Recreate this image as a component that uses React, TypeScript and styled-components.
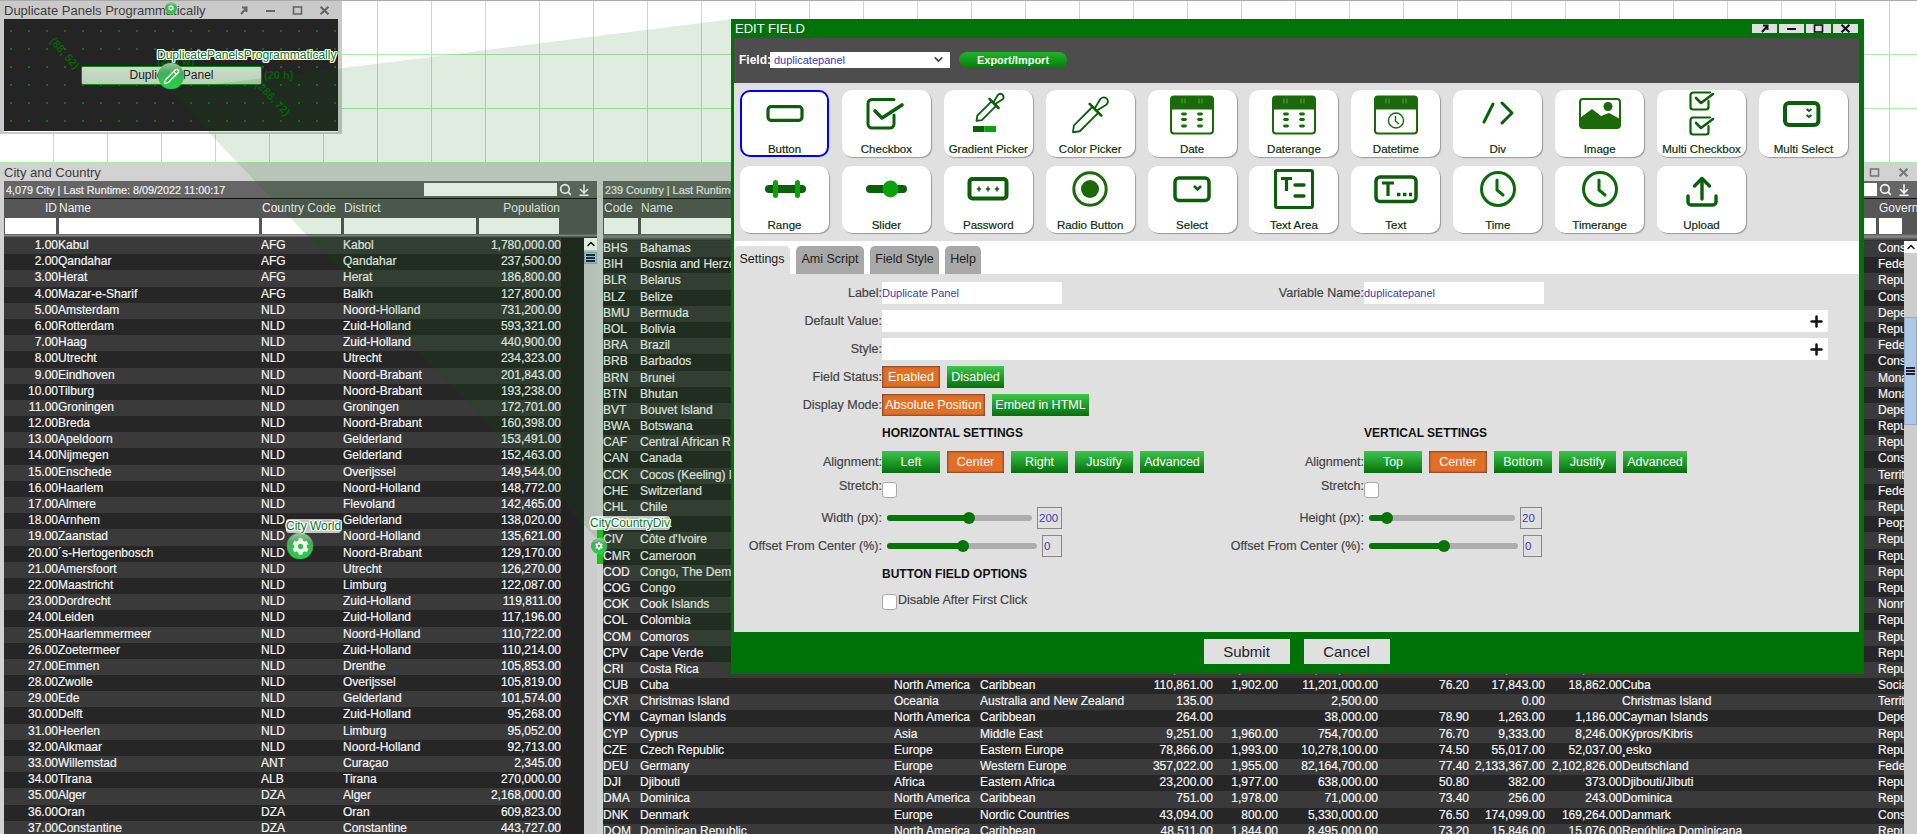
import React from "react";
import styled, { createGlobalStyle } from "styled-components";
import { ArrowDownToLine, ChevronDown, ChevronUp, Pencil, Plus, Search } from "lucide-react";
import { FaCog } from "react-icons/fa";

const DARK = "#0b5f0b";
const BRIGHT = "#0aa20a";

const GlobalStyle = createGlobalStyle`
  html, body {
    margin: 0;
    padding: 0;
    background: #fff;
    font-family: "Liberation Sans", Arial, sans-serif;
  }
`;

const Desktop = styled.div`
  position: relative;
  width: 1917px;
  height: 834px;
  overflow: hidden;
  border-top: 1px solid #aaa;
  box-sizing: border-box;
  background-color: #fff;
  background-image: linear-gradient(to right, transparent 53px, #aeeaae 53px),
    linear-gradient(to bottom, transparent 53px, #aeeaae 53px);
  background-size: 54px 54px;
`;

/* ---------- top preview window ---------- */

const PreviewWindow = styled.div`
  position: absolute;
  left: 0;
  top: -1px;
  width: 342px;
  height: 134px;
  background: #c9c9c9;
  border-top: 1px solid #aaa;
  box-sizing: border-box;
`;

const WindowTitle = styled.div`
  height: 18px;
  padding-left: 4px;
  display: flex;
  align-items: center;
  justify-content: space-between;
  font-size: 13px;
  color: #3c3c3c;
`;

const WindowControls = styled.div<{ $gap: number; $pad: number }>`
  display: flex;
  align-items: center;
  gap: ${(p) => p.$gap}px;
  padding-right: ${(p) => p.$pad}px;
`;

const Canvas = styled.div`
  position: relative;
  margin: 0 4px;
  height: 113px;
  background-color: #242424;
  background-image: radial-gradient(circle, #1b6a1b 1px, transparent 1.4px);
  background-size: 18px 18px;
  background-position: -2px 3px;
  border-bottom: 1px solid #fff;
  box-sizing: border-box;
`;

const PreviewButton = styled.div`
  position: absolute;
  left: 77px;
  top: 47px;
  width: 181px;
  height: 19px;
  box-sizing: border-box;
  border: 1px solid #0a8a0a;
  border-radius: 2px;
  background: linear-gradient(#c9dcc9, #b9d2b9);
  font-size: 12px;
  line-height: 17px;
  text-align: center;
  color: #222;
`;

const DimLabel = styled.span<{ $x: number; $y: number; $r: number }>`
  position: absolute;
  left: ${(p) => p.$x}px;
  top: ${(p) => p.$y}px;
  transform: rotate(${(p) => p.$r}deg);
  font-size: 11px;
  font-weight: bold;
  color: #0a5f0a;
  white-space: nowrap;
`;

const NodeLabel = styled.span<{ $x: number; $y: number; $size: number; $solid?: boolean }>`
  position: absolute;
  left: ${(p) => p.$x}px;
  top: ${(p) => p.$y}px;
  z-index: 6;
  font-size: ${(p) => p.$size}px;
  line-height: 14px;
  color: #0a7a1a;
  white-space: nowrap;
  background: ${(p) => (p.$solid ? "rgba(255, 255, 255, 0.72)" : "none")};
  border-radius: 3px;
  text-shadow: -1px 0 #fff, 1px 0 #fff, 0 -1px #fff, 0 1px #fff, -1px -1px #fff,
    1px 1px #fff, 1px -1px #fff, -1px 1px #fff;
`;

const Node = styled.div<{ $x: number; $y: number; $d: number }>`
  position: absolute;
  left: ${(p) => p.$x - p.$d / 2}px;
  top: ${(p) => p.$y - p.$d / 2}px;
  width: ${(p) => p.$d}px;
  height: ${(p) => p.$d}px;
  z-index: 6;
  border-radius: 50%;
  display: flex;
  align-items: center;
  justify-content: center;
  color: #eef8ee;
  background: linear-gradient(#9cc7a2 0%, #45ad5c 35%, #20d443 100%);
  box-shadow: 0 0 1px #cfe8cf;
`;

const Connector = styled.div`
  position: absolute;
  left: 597px;
  top: 527px;
  width: 6px;
  height: 36px;
  z-index: 5;
  background: #19c219;
`;

const Beam = styled.svg`
  position: absolute;
  left: 0;
  top: 0;
  z-index: 4;
  pointer-events: none;
`;

/* ---------- city and country panel ---------- */

const DataWindow = styled.div`
  position: absolute;
  left: 0;
  top: 162px;
  width: 1917px;
  height: 672px;
  background: #d2d2d2;
`;

const DataBody = styled.div`
  display: flex;
  padding-left: 4px;
  gap: 6px;
`;

const TableWrap = styled.div<{ $w: number }>`
  width: ${(p) => p.$w}px;
  flex: none;
  overflow: hidden;
`;

const Toolbar = styled.div`
  height: 17px;
  border-bottom: 1px solid #111;
  background: #666;
  display: flex;
  align-items: center;
  padding-left: 2px;
  font-size: 10.8px;
  color: #eee;
  -webkit-text-stroke: 0.2px #eee;
  white-space: nowrap;
`;

const ToolbarText = styled.span`
  flex: 1;
  overflow: hidden;
`;

const ToolbarSearch = styled.div<{ $w: number }>`
  width: ${(p) => p.$w}px;
  height: 13px;
  background: #fff;
  flex: none;
`;

const ToolIcons = styled.div`
  display: flex;
  align-items: center;
  gap: 5px;
  width: 38px;
  flex: none;
  padding-left: 2px;
  color: #fff;
`;

const ColumnRow = styled.div<{ $cols: string }>`
  display: grid;
  grid-template-columns: ${(p) => p.$cols};
`;

const HeaderRow = styled(ColumnRow)`
  height: 19px;
  background: #565656;
  font-size: 12px;
  line-height: 19px;
  color: #f2f2f2;
`;

const HeaderCell = styled.div<{ $right?: boolean }>`
  padding: 0 ${(p) => (p.$right ? "1px" : "0")} 0 ${(p) => (p.$right ? "0" : "1px")};
  text-align: ${(p) => (p.$right ? "right" : "left")};
  white-space: nowrap;
`;

const FilterRow = styled(ColumnRow)`
  height: 16px;
  background: #565656;
`;

const FilterCell = styled.div`
  background: #fff;
  margin: 0 2px 0 1px;
`;

const Band = styled.div<{ $h: number }>`
  height: ${(p) => p.$h}px;
  background: linear-gradient(#5e5e5e, #8a8a8a 40%, #262626);
`;

const RowsArea = styled.div`
  display: flex;
  background: #222;
`;

const Rows = styled.div<{ $w: number }>`
  width: ${(p) => p.$w}px;
  flex: none;
  overflow: hidden;
`;

const DataRow = styled(ColumnRow)<{ $odd: boolean }>`
  height: 16.19px;
  background: ${(p) => (p.$odd ? "#3a3a3a" : "#262626")};
  color: #f4f4f4;
  -webkit-text-stroke: 0.2px #f4f4f4;
  font-size: 12px;
  line-height: 14px;
  white-space: nowrap;
`;

const DataCell = styled.div<{ $right?: boolean }>`
  overflow: hidden;
  text-align: ${(p) => (p.$right ? "right" : "left")};
`;

const Scrollbar = styled.div<{ $gap: number; $w: number }>`
  margin-left: ${(p) => p.$gap}px;
  width: ${(p) => p.$w}px;
  flex: none;
  height: 600px;
  background: #cdcdcd;
  display: flex;
  flex-direction: column;
`;

const ScrollUp = styled.div`
  height: 12px;
  background: #fff;
  color: #111;
  display: flex;
  align-items: center;
  justify-content: center;
`;

const ScrollThumb = styled.div<{ $top: number; $h: number }>`
  margin-top: ${(p) => p.$top}px;
  height: ${(p) => p.$h}px;
  background: #aec8e8;
  border: 1px solid #8ea8c8;
  box-sizing: border-box;
  display: flex;
  align-items: center;
  justify-content: center;
`;

const Grip = styled.div`
  width: 9px;
  height: 8px;
  border-top: 2px solid #223;
  border-bottom: 2px solid #223;
  box-sizing: border-box;
  &::after {
    content: "";
    display: block;
    margin-top: 1px;
    height: 2px;
    background: #223;
  }
`;

/* ---------- edit field dialog ---------- */

const Dialog = styled.div`
  position: absolute;
  left: 731px;
  top: 18px;
  width: 1133px;
  height: 655px;
  z-index: 10;
  background: #007308;
  display: flex;
  flex-direction: column;
  padding: 0 5px 0 3px;
  box-sizing: border-box;
`;

const DialogHead = styled.div`
  height: 19px;
  flex: none;
  display: flex;
  align-items: center;
  justify-content: space-between;
  color: #fff;
  font-size: 13px;
  padding-left: 1px;
`;

const DialogControls = styled.div`
  display: flex;
  gap: 2px;
  margin-right: 1px;
`;

const DialogControl = styled.div`
  width: 25px;
  height: 9px;
  background: #e0e0e0;
  display: flex;
  align-items: center;
  justify-content: center;
`;

const FieldBar = styled.div`
  height: 45px;
  flex: none;
  background: #4d4d4d;
  display: flex;
  align-items: center;
  padding: 0 0 2px 5px;
  box-sizing: border-box;
`;

const FieldLabel = styled.span`
  width: 31px;
  color: #fff;
  font-size: 12px;
  font-weight: bold;
`;

const FieldSelect = styled.div`
  width: 180px;
  height: 16px;
  background: #fff;
  color: #3b3bb5;
  font-size: 11px;
  line-height: 16px;
  padding: 0 5px 0 4px;
  box-sizing: border-box;
  display: flex;
  align-items: center;
  justify-content: space-between;
`;

const PillButton = styled.div`
  margin-left: 9px;
  width: 108px;
  height: 16px;
  border-radius: 8px;
  background: linear-gradient(#1fb52a, #067a0c);
  color: #fff;
  font-size: 11px;
  font-weight: bold;
  line-height: 16px;
  text-align: center;
`;

const Palette = styled.div`
  height: 158px;
  flex: none;
  background: #e0e0e0;
  box-sizing: border-box;
  padding: 7px 0 0 6px;
  display: grid;
  grid-template-columns: repeat(11, 89px);
  grid-auto-rows: 67px;
  column-gap: 12.9px;
  row-gap: 9px;
`;

const Card = styled.div<{ $active?: boolean }>`
  box-sizing: border-box;
  background: #fff;
  border-radius: 10px;
  border: ${(p) => (p.$active ? "2px solid #0000f0" : "none")};
  box-shadow: ${(p) => (p.$active ? "none" : "1px 1px 1px #999")};
  padding-top: ${(p) => (p.$active ? "0" : "2px")};
  display: flex;
  flex-direction: column;
  align-items: center;
`;

const CardIcon = styled.svg`
  width: 56px;
  height: 48px;
  flex: none;
  overflow: visible;
  margin-top: -2px;
`;

const CardLabel = styled.div`
  margin-top: 4px;
  font-size: 11.5px;
  line-height: 14px;
  color: #0d2f0d;
  -webkit-text-stroke: 0.2px #0d2f0d;
  white-space: nowrap;
`;

const TabStrip = styled.div`
  height: 33px;
  flex: none;
  background: #fff;
  display: flex;
  align-items: flex-end;
  gap: 6px;
`;

const Tab = styled.div<{ $active?: boolean; $w: number }>`
  width: ${(p) => p.$w}px;
  height: 28px;
  border-radius: 5px 5px 0 0;
  background: ${(p) => (p.$active ? "#e0e0e0" : "#a8a8a8")};
  color: #222;
  font-size: 12.5px;
  line-height: 27px;
  text-align: center;
`;

const FormBody = styled.div`
  height: 358px;
  flex: none;
  background: #e0e0e0;
  box-sizing: border-box;
  padding-top: 8px;
  display: flex;
  flex-direction: column;
  gap: 6px;
`;

const FormRow = styled.div<{ $h?: number }>`
  display: grid;
  grid-template-columns: 148px 328px 154px 1fr;
  height: ${(p) => p.$h || 22}px;
  align-items: center;
`;

const FormLabel = styled.div<{ $top?: boolean }>`
  text-align: right;
  align-self: ${(p) => (p.$top ? "start" : "center")};
  font-size: 12.5px;
  line-height: 14px;
  color: #444;
  -webkit-text-stroke: 0.2px #444;
  white-space: nowrap;
`;

const Controls = styled.div<{ $gap?: number; $span?: boolean }>`
  display: flex;
  align-items: center;
  gap: ${(p) => p.$gap ?? 7}px;
  grid-column: ${(p) => (p.$span ? "2 / -1" : "auto")};
`;

const TextInput = styled.div<{ $w: number }>`
  width: ${(p) => p.$w}px;
  height: 22px;
  flex: none;
  background: #fff;
  color: #3b3bb5;
  font-size: 11px;
  line-height: 22px;
  display: flex;
  align-items: center;
  justify-content: space-between;
`;

const PlusSlot = styled.span`
  margin-left: auto;
  padding-right: 3px;
  display: flex;
  color: #111;
`;

const ActionButton = styled.div<{ $w: number; $on?: boolean }>`
  width: ${(p) => p.$w}px;
  height: 100%;
  min-height: 22px;
  flex: none;
  box-sizing: border-box;
  color: #fff;
  font-size: 12.5px;
  line-height: 22px;
  text-align: center;
  white-space: nowrap;
  background: ${(p) =>
    p.$on ? "#e36f26" : "linear-gradient(#3cc64c, #066f0a)"};
  box-shadow: ${(p) => (p.$on ? "inset 0 0 2px 1px #7a4a2a" : "none")};
`;

const SectionTitle = styled.div`
  font-size: 12px;
  font-weight: bold;
  color: #111;
  white-space: nowrap;
`;

const CheckBox = styled.div`
  width: 13px;
  height: 14px;
  flex: none;
  background: #fff;
  border: 1px solid #a8a8a8;
  border-radius: 3px;
`;

const CheckText = styled.span`
  font-size: 12.5px;
  color: #444;
  -webkit-text-stroke: 0.2px #444;
  white-space: nowrap;
  margin-bottom: 4px;
`;

const Track = styled.div<{ $w: number }>`
  position: relative;
  width: ${(p) => p.$w}px;
  height: 6px;
  flex: none;
  margin-left: 5px;
  border-radius: 3px;
  background: #adadad;
`;

const TrackFill = styled.div`
  height: 100%;
  border-radius: 3px;
  background: #067406;
`;

const Thumb = styled.div`
  position: absolute;
  top: -3px;
  width: 12px;
  height: 12px;
  margin-left: -6px;
  border-radius: 50%;
  background: #067406;
`;

const NumberBox = styled.div<{ $w: number }>`
  width: ${(p) => p.$w}px;
  height: 22px;
  flex: none;
  box-sizing: border-box;
  border: 1px solid #888;
  color: #3b3bb5;
  font-size: 11.5px;
  line-height: 20px;
  padding-left: 1px;
`;

const Footer = styled.div`
  flex: 1;
  display: flex;
  justify-content: center;
  align-items: flex-start;
  gap: 14px;
  padding-top: 7px;
`;

const FooterButton = styled.div`
  width: 86px;
  height: 25px;
  background: #e0e0e0;
  color: #222;
  font-size: 15px;
  line-height: 25px;
  text-align: center;
`;

/* ---------- icons ---------- */

const Dropper = ({ x, y, s }: { x: number; y: number; s: number }) => (
  <g transform={`translate(${x} ${y}) scale(${s})`} fill="#fff" stroke={DARK} strokeWidth={1.8 / s} strokeLinejoin="round" strokeLinecap="round">
    <path d="M2 38 L3 31 L22 12 L28 18 L9 37 Z" />
    <path d="M24 14 L30 4 Q33 1 36.5 3.5 Q39 7 36 10 L26 16 Z" />
    <path d="M19 9 L31 21" strokeWidth={2.6 / s} />
  </g>
);

const Calendar = ({ children }: { children: React.ReactNode }) => (
  <g transform="translate(0 2.5)">
    <rect x="7" y="4" width="42" height="37" rx="3" fill="#fff" stroke="#1a6a0a" strokeWidth="2" />
    <path d="M7 7a3 3 0 0 1 3-3h36a3 3 0 0 1 3 3v10H7z" fill="#1a6a0a" />
    <path d="M18 6v5M21 6v5M35 6v5M38 6v5" stroke="#5f9a5f" strokeWidth="1" />
    {children}
  </g>
);

const Dashes = () => (
  <path
    d="M18.5 21.5h3M34.5 21.5h3M18.5 27h3M34.5 27h3M18.5 33.5h3M34.5 33.5h3"
    stroke="#1a6a0a"
    strokeWidth="2.8"
    strokeLinecap="round"
  />
);

const CheckMark = ({ y }: { y: number }) => (
  <g transform={`translate(16 ${y})`} fill="none" stroke={DARK} strokeLinecap="round" strokeLinejoin="round">
    <path d="M20 2.5 H3 a2.5 2.5 0 0 0 -2.5 2.5 V17 a2.5 2.5 0 0 0 2.5 2.5 H16 a2.5 2.5 0 0 0 2.5 -2.5 V11" strokeWidth="2.2" />
    <path d="M6 8 l5 5 L23 4" strokeWidth="2.6" />
  </g>
);

const Clock = () => (
  <g fill="none" stroke="#0b6a0b" strokeLinecap="round">
    <circle cx="28" cy="23" r="16.5" strokeWidth="3" />
    <path d="M27 14 V24 L33 29" strokeWidth="3" />
  </g>
);

const icons: Record<string, React.ReactNode> = {
  Button: <rect x="11" y="16.7" width="34" height="13.6" rx="3" fill="none" stroke={DARK} strokeWidth="3.2" />,
  Checkbox: (
    <g fill="none" stroke={DARK} strokeLinecap="round" strokeLinejoin="round">
      <path d="M36 9.5 H14 a4 4 0 0 0 -4 4 V34 a4 4 0 0 0 4 4 H32 a4 4 0 0 0 4 -4 V25" strokeWidth="3" />
      <path d="M17 21 l7 7 L44 15" strokeWidth="3.6" />
    </g>
  ),
  "Gradient Picker": (
    <g>
      <Dropper x={15} y={2} s={0.76} />
      <rect x="13" y="36" width="11.5" height="6" fill={DARK} />
      <rect x="24.5" y="36" width="11.5" height="6" fill={BRIGHT} />
    </g>
  ),
  "Color Picker": <Dropper x={9} y={5} s={0.98} />,
  Date: <Calendar><Dashes /></Calendar>,
  Daterange: <Calendar><Dashes /></Calendar>,
  Datetime: (
    <Calendar>
      <g fill="none" stroke="#1a6a0a" strokeWidth="1.4">
        <circle cx="28" cy="28" r="7.5" />
        <path d="M27.5 23.5 V28.5 L31 31.5" />
      </g>
    </Calendar>
  ),
  Div: (
    <g fill="none" stroke={DARK} strokeWidth="3" strokeLinecap="round" strokeLinejoin="round">
      <path d="M23 14 L14 32" />
      <path d="M32 13 L42 23 L32 33" />
    </g>
  ),
  Image: (
    <g>
      <rect x="8" y="9" width="40" height="29" rx="3" fill="#fff" stroke="#1a6a0a" strokeWidth="2" />
      <path d="M8 28 L20 19 L29 26 L37 23 L48 29 V35 a3 3 0 0 1 -3 3 H11 a3 3 0 0 1 -3 -3z" fill="#1a6a0a" />
      <circle cx="36" cy="16.5" r="4.5" fill="#1a6a0a" />
    </g>
  ),
  "Multi Checkbox": (
    <g>
      <CheckMark y={0} />
      <CheckMark y={25} />
    </g>
  ),
  "Multi Select": (
    <g fill="none" stroke={DARK}>
      <rect x="10" y="13" width="33.4" height="22" rx="4" strokeWidth="4" />
      <path d="M31.5 19 l2.5 2 l2.5 -2 M31.5 25 l2.5 2 l2.5 -2" strokeWidth="2" />
    </g>
  ),
  Range: (
    <g>
      <rect x="8" y="19" width="41" height="8" rx="4" fill={DARK} />
      <rect x="16" y="14" width="5" height="18" rx="2.5" fill={BRIGHT} />
      <rect x="38" y="14" width="5" height="18" rx="2.5" fill={BRIGHT} />
    </g>
  ),
  Slider: (
    <g>
      <rect x="8" y="19" width="41" height="8" rx="4" fill={DARK} />
      <ellipse cx="32.5" cy="23" rx="8" ry="8.5" fill={BRIGHT} />
    </g>
  ),
  Password: (
    <g>
      <rect x="9.5" y="13" width="37" height="19.5" rx="3" fill="none" stroke={DARK} strokeWidth="4" />
      <path d="M19 20.5v5M16.8 23h4.4M28 20.5v5M25.8 23h4.4M37 20.5v5M34.8 23h4.4" stroke={DARK} strokeWidth="1.5" />
    </g>
  ),
  "Radio Button": (
    <g>
      <circle cx="28" cy="23" r="16.2" fill="none" stroke="#1a6a0a" strokeWidth="3" />
      <circle cx="28" cy="23" r="9" fill="#1a6a0a" />
    </g>
  ),
  Select: (
    <g fill="none" stroke={DARK}>
      <rect x="11" y="12" width="34" height="22.5" rx="4" strokeWidth="3.5" />
      <path d="M30 20 l3.5 3.5 L37 20" strokeWidth="2.6" />
    </g>
  ),
  "Text Area": (
    <g fill="none" stroke={DARK}>
      <rect x="9.5" y="4.5" width="37" height="37" rx="1.5" strokeWidth="3" />
      <path d="M15 12.5 H26 M20.5 12.5 V25" strokeWidth="3.2" />
      <path d="M29 19 H38 M29 30 H38" strokeWidth="3.4" strokeLinecap="round" />
    </g>
  ),
  Text: (
    <g fill="none" stroke={DARK}>
      <rect x="8" y="11" width="40" height="24.5" rx="4" strokeWidth="3.5" />
      <path d="M14 17 H26 M20 17 V30" strokeWidth="3.2" />
      <path d="M29 28.5 h3.4 M35 28.5 h3.4 M41 28.5 h3" strokeWidth="3.4" />
    </g>
  ),
  Time: <Clock />,
  Timerange: <Clock />,
  Upload: (
    <g fill="none" stroke={DARK} strokeWidth="3.4" strokeLinecap="round" strokeLinejoin="round">
      <path d="M28 33 V13" />
      <path d="M20.5 20 L28 12.5 L35.5 20" />
      <path d="M14 30 V36 a3 3 0 0 0 3 3 H39 a3 3 0 0 0 3 -3 V30" />
    </g>
  ),
};

const paletteItems = [
  "Button", "Checkbox", "Gradient Picker", "Color Picker", "Date", "Daterange", "Datetime", "Div", "Image", "Multi Checkbox", "Multi Select",
  "Range", "Slider", "Password", "Radio Button", "Select", "Text Area", "Text", "Time", "Timerange", "Upload",
];

const WinGlyph = ({ kind, color = "#111" }: { kind: string; color?: string }) => (
  <svg width="11" height="9" viewBox="0 0 11 9" fill="none" stroke={color} strokeWidth="2">
    {kind === "pin" && <path d="M3 8 L8 2.5 M4 1.5 H8.5 V6" />}
    {kind === "min" && <path d="M1 5 H10" />}
    {kind === "max" && <rect x="1.5" y="1" width="8" height="7" strokeWidth="1.6" />}
    {kind === "close" && <path d="M1.5 0.8 L9.5 8.2 M9.5 0.8 L1.5 8.2" strokeWidth="2.2" />}
  </svg>
);

/* ---------- data ---------- */

const cities: [string, string, string, string, string][] = [
  ["1.00", "Kabul", "AFG", "Kabol", "1,780,000.00"],
  ["2.00", "Qandahar", "AFG", "Qandahar", "237,500.00"],
  ["3.00", "Herat", "AFG", "Herat", "186,800.00"],
  ["4.00", "Mazar-e-Sharif", "AFG", "Balkh", "127,800.00"],
  ["5.00", "Amsterdam", "NLD", "Noord-Holland", "731,200.00"],
  ["6.00", "Rotterdam", "NLD", "Zuid-Holland", "593,321.00"],
  ["7.00", "Haag", "NLD", "Zuid-Holland", "440,900.00"],
  ["8.00", "Utrecht", "NLD", "Utrecht", "234,323.00"],
  ["9.00", "Eindhoven", "NLD", "Noord-Brabant", "201,843.00"],
  ["10.00", "Tilburg", "NLD", "Noord-Brabant", "193,238.00"],
  ["11.00", "Groningen", "NLD", "Groningen", "172,701.00"],
  ["12.00", "Breda", "NLD", "Noord-Brabant", "160,398.00"],
  ["13.00", "Apeldoorn", "NLD", "Gelderland", "153,491.00"],
  ["14.00", "Nijmegen", "NLD", "Gelderland", "152,463.00"],
  ["15.00", "Enschede", "NLD", "Overijssel", "149,544.00"],
  ["16.00", "Haarlem", "NLD", "Noord-Holland", "148,772.00"],
  ["17.00", "Almere", "NLD", "Flevoland", "142,465.00"],
  ["18.00", "Arnhem", "NLD", "Gelderland", "138,020.00"],
  ["19.00", "Zaanstad", "NLD", "Noord-Holland", "135,621.00"],
  ["20.00", "´s-Hertogenbosch", "NLD", "Noord-Brabant", "129,170.00"],
  ["21.00", "Amersfoort", "NLD", "Utrecht", "126,270.00"],
  ["22.00", "Maastricht", "NLD", "Limburg", "122,087.00"],
  ["23.00", "Dordrecht", "NLD", "Zuid-Holland", "119,811.00"],
  ["24.00", "Leiden", "NLD", "Zuid-Holland", "117,196.00"],
  ["25.00", "Haarlemmermeer", "NLD", "Noord-Holland", "110,722.00"],
  ["26.00", "Zoetermeer", "NLD", "Zuid-Holland", "110,214.00"],
  ["27.00", "Emmen", "NLD", "Drenthe", "105,853.00"],
  ["28.00", "Zwolle", "NLD", "Overijssel", "105,819.00"],
  ["29.00", "Ede", "NLD", "Gelderland", "101,574.00"],
  ["30.00", "Delft", "NLD", "Zuid-Holland", "95,268.00"],
  ["31.00", "Heerlen", "NLD", "Limburg", "95,052.00"],
  ["32.00", "Alkmaar", "NLD", "Noord-Holland", "92,713.00"],
  ["33.00", "Willemstad", "ANT", "Curaçao", "2,345.00"],
  ["34.00", "Tirana", "ALB", "Tirana", "270,000.00"],
  ["35.00", "Alger", "DZA", "Alger", "2,168,000.00"],
  ["36.00", "Oran", "DZA", "Oran", "609,823.00"],
  ["37.00", "Constantine", "DZA", "Constantine", "443,727.00"],
];

// code, name, government, then the columns that show below the dialog
const countries: string[][] = [
  ["BHS", "Bahamas", "Constitutional Monarchy"],
  ["BIH", "Bosnia and Herzegovina", "Federal Republic"],
  ["BLR", "Belarus", "Republic"],
  ["BLZ", "Belize", "Constitutional Monarchy"],
  ["BMU", "Bermuda", "Dependent Territory"],
  ["BOL", "Bolivia", "Republic"],
  ["BRA", "Brazil", "Federal Republic"],
  ["BRB", "Barbados", "Constitutional Monarchy"],
  ["BRN", "Brunei", "Monarchy"],
  ["BTN", "Bhutan", "Monarchy"],
  ["BVT", "Bouvet Island", "Dependent Territory"],
  ["BWA", "Botswana", "Republic"],
  ["CAF", "Central African Republic", "Republic"],
  ["CAN", "Canada", "Constitutional Monarchy"],
  ["CCK", "Cocos (Keeling) Islands", "Territory"],
  ["CHE", "Switzerland", "Federation"],
  ["CHL", "Chile", "Republic"],
  ["CHN", "China", "People's Republic"],
  ["CIV", "Côte d'Ivoire", "Republic"],
  ["CMR", "Cameroon", "Republic"],
  ["COD", "Congo, The Democratic Republic", "Republic"],
  ["COG", "Congo", "Republic"],
  ["COK", "Cook Islands", "Nonmetropolitan Territory"],
  ["COL", "Colombia", "Republic"],
  ["COM", "Comoros", "Republic"],
  ["CPV", "Cape Verde", "Republic"],
  ["CRI", "Costa Rica", "Republic", "North America", "Central America", "51,100.00", "1,821.00", "4,023,000.00", "75.80", "10,226.00", "9,757.00", "Costa Rica"],
  ["CUB", "Cuba", "Socialistic Republic", "North America", "Caribbean", "110,861.00", "1,902.00", "11,201,000.00", "76.20", "17,843.00", "18,862.00", "Cuba"],
  ["CXR", "Christmas Island", "Territory", "Oceania", "Australia and New Zealand", "135.00", "", "2,500.00", "", "0.00", "", "Christmas Island"],
  ["CYM", "Cayman Islands", "Dependent Territory", "North America", "Caribbean", "264.00", "", "38,000.00", "78.90", "1,263.00", "1,186.00", "Cayman Islands"],
  ["CYP", "Cyprus", "Republic", "Asia", "Middle East", "9,251.00", "1,960.00", "754,700.00", "76.70", "9,333.00", "8,246.00", "Kýpros/Kibris"],
  ["CZE", "Czech Republic", "Republic", "Europe", "Eastern Europe", "78,866.00", "1,993.00", "10,278,100.00", "74.50", "55,017.00", "52,037.00", "¸esko"],
  ["DEU", "Germany", "Federal Republic", "Europe", "Western Europe", "357,022.00", "1,955.00", "82,164,700.00", "77.40", "2,133,367.00", "2,102,826.00", "Deutschland"],
  ["DJI", "Djibouti", "Republic", "Africa", "Eastern Africa", "23,200.00", "1,977.00", "638,000.00", "50.80", "382.00", "373.00", "Djibouti/Jibuti"],
  ["DMA", "Dominica", "Republic", "North America", "Caribbean", "751.00", "1,978.00", "71,000.00", "73.40", "256.00", "243.00", "Dominica"],
  ["DNK", "Denmark", "Constitutional Monarchy", "Europe", "Nordic Countries", "43,094.00", "800.00", "5,330,000.00", "76.50", "174,099.00", "169,264.00", "Danmark"],
  ["DOM", "Dominican Republic", "Republic", "North America", "Caribbean", "48,511.00", "1,844.00", "8,495,000.00", "73.20", "15,846.00", "15,076.00", "República Dominicana"],
];

const CITY_COLS = "54px 203px 82px 135px 83px";
const COUNTRY_COLS = "37px 254px 86px 149px 84px 65px 100px 91px 76px 77px 256px 26px";

const Slider = ({ track, value, box, num }: { track: number; value: number; box: number; num: string }) => (
  <Controls $gap={5}>
    <Track $w={track}>
      <TrackFill style={{ width: value }} />
      <Thumb style={{ left: value }} />
    </Track>
    <NumberBox $w={box}>{num}</NumberBox>
  </Controls>
);

const ButtonSet = ({ items }: { items: [string, number, boolean?][] }) => (
  <Controls>
    {items.map(([label, w, on]) => (
      <ActionButton key={label} $w={w} $on={on}>
        {label}
      </ActionButton>
    ))}
  </Controls>
);

const App = () => (
  <Desktop>
    <GlobalStyle />

    <PreviewWindow>
      <WindowTitle>
        Duplicate Panels Programmatically
        <WindowControls $gap={16} $pad={12}>
          <WinGlyph kind="pin" color="#666" />
          <WinGlyph kind="min" color="#666" />
          <WinGlyph kind="max" color="#666" />
          <WinGlyph kind="close" color="#666" />
        </WindowControls>
      </WindowTitle>
      <Canvas>
        <DimLabel $x={42} $y={28} $r={48}>(88, 52)</DimLabel>
        <DimLabel $x={153} $y={36} $r={0}>(200 w)</DimLabel>
        <DimLabel $x={260} $y={50} $r={0}>(20 h)</DimLabel>
        <DimLabel $x={247} $y={73} $r={46}>(286, 72)</DimLabel>
        <PreviewButton>Duplicate Panel</PreviewButton>
      </Canvas>
    </PreviewWindow>

    <DataWindow>
      <WindowTitle>
        City and Country
        <WindowControls $gap={18} $pad={8}>
          <WinGlyph kind="max" color="#777" />
          <WinGlyph kind="close" color="#777" />
        </WindowControls>
      </WindowTitle>
      <DataBody>
        <TableWrap $w={593}>
          <Toolbar>
            <ToolbarText>4,079 City | Last Runtime: 8/09/2022 11:00:17</ToolbarText>
            <ToolbarSearch $w={133} />
            <ToolIcons>
              <Search size={13} strokeWidth={3} />
              <ArrowDownToLine size={14} strokeWidth={2.5} />
            </ToolIcons>
          </Toolbar>
          <HeaderRow $cols={CITY_COLS}>
            <HeaderCell $right>ID</HeaderCell>
            <HeaderCell>Name</HeaderCell>
            <HeaderCell>Country Code</HeaderCell>
            <HeaderCell>District</HeaderCell>
            <HeaderCell $right>Population</HeaderCell>
          </HeaderRow>
          <FilterRow $cols={CITY_COLS}>
            <FilterCell />
            <FilterCell />
            <FilterCell />
            <FilterCell />
            <FilterCell />
          </FilterRow>
          <Band $h={4} />
          <RowsArea>
            <Rows $w={557}>
              {cities.map((c, i) => (
                <DataRow key={c[0]} $cols={CITY_COLS} $odd={i % 2 === 0}>
                  <DataCell $right>{c[0]}</DataCell>
                  <DataCell>{c[1]}</DataCell>
                  <DataCell>{c[2]}</DataCell>
                  <DataCell>{c[3]}</DataCell>
                  <DataCell $right>{c[4]}</DataCell>
                </DataRow>
              ))}
            </Rows>
            <Scrollbar $gap={23} $w={13}>
              <ScrollUp><ChevronUp size={12} strokeWidth={3} /></ScrollUp>
              <ScrollThumb $top={2} $h={12}><Grip /></ScrollThumb>
            </Scrollbar>
          </RowsArea>
        </TableWrap>
        <TableWrap $w={1314}>
          <Toolbar>
            <ToolbarText>239 Country | Last Runtime: 8/09/2022 11:00:17</ToolbarText>
            <ToolbarSearch $w={100} />
            <ToolIcons>
              <Search size={13} strokeWidth={3} />
              <ArrowDownToLine size={14} strokeWidth={2.5} />
            </ToolIcons>
          </Toolbar>
          <HeaderRow $cols={COUNTRY_COLS}>
            <HeaderCell>Code</HeaderCell>
            <HeaderCell>Name</HeaderCell>
            {Array.from({ length: 8 }).map((_, i) => (
              <HeaderCell key={i} />
            ))}
            <HeaderCell />
            <HeaderCell>Government</HeaderCell>
          </HeaderRow>
          <FilterRow $cols={COUNTRY_COLS}>
            {Array.from({ length: 12 }).map((_, i) => (
              <FilterCell key={i} />
            ))}
          </FilterRow>
          <Band $h={7} />
          <RowsArea>
            <Rows $w={1301}>
              {countries.map((c, i) => (
                <DataRow key={c[0]} $cols={COUNTRY_COLS} $odd={i % 2 === 0}>
                  <DataCell>{c[0]}</DataCell>
                  <DataCell>{c[1]}</DataCell>
                  <DataCell>{c[3]}</DataCell>
                  <DataCell>{c[4]}</DataCell>
                  <DataCell $right>{c[5]}</DataCell>
                  <DataCell $right>{c[6]}</DataCell>
                  <DataCell $right>{c[7]}</DataCell>
                  <DataCell $right>{c[8]}</DataCell>
                  <DataCell $right>{c[9]}</DataCell>
                  <DataCell $right>{c[10]}</DataCell>
                  <DataCell>{c[11]}</DataCell>
                  <DataCell>{c[2]}</DataCell>
                </DataRow>
              ))}
            </Rows>
            <Scrollbar $gap={0} $w={13}>
              <ScrollUp><ChevronUp size={12} strokeWidth={3} /></ScrollUp>
              <ScrollThumb $top={64} $h={108}><Grip /></ScrollThumb>
            </Scrollbar>
          </RowsArea>
        </TableWrap>
      </DataBody>
    </DataWindow>

    <Beam width="1917" height="834" viewBox="0 0 1917 834">
      <polygon points="168,89 733,18 733,680" fill="#006400" fillOpacity="0.12" />
    </Beam>

    <NodeLabel $x={157} $y={47} $size={12}>DuplicatePanelsProgrammatically</NodeLabel>
    <Node $x={171} $y={75} $d={26}><Pencil size={17} strokeWidth={2} /></Node>
    <Node $x={171} $y={7} $d={12}><FaCog size={6} /></Node>
    <NodeLabel $x={286} $y={518} $size={12} $solid>City World</NodeLabel>
    <Node $x={300} $y={545} $d={26}><FaCog size={17} /></Node>
    <Connector />
    <NodeLabel $x={590} $y={515} $size={12} $solid>CityCountryDiv</NodeLabel>
    <Node $x={599} $y={545} $d={16}><FaCog size={8} /></Node>

    <Dialog>
      <DialogHead>
        EDIT FIELD
        <DialogControls>
          <DialogControl><WinGlyph kind="pin" /></DialogControl>
          <DialogControl><WinGlyph kind="min" /></DialogControl>
          <DialogControl><WinGlyph kind="max" /></DialogControl>
          <DialogControl><WinGlyph kind="close" /></DialogControl>
        </DialogControls>
      </DialogHead>
      <FieldBar>
        <FieldLabel>Field:</FieldLabel>
        <FieldSelect>
          duplicatepanel
          <ChevronDown size={13} strokeWidth={3} color="#3b3b8f" />
        </FieldSelect>
        <PillButton>Export/Import</PillButton>
      </FieldBar>
      <Palette>
        {paletteItems.map((name) => (
          <Card key={name} $active={name === "Button"}>
            <CardIcon viewBox="0 0 56 48">{icons[name]}</CardIcon>
            <CardLabel>{name}</CardLabel>
          </Card>
        ))}
      </Palette>
      <TabStrip>
        <Tab $active $w={56}>Settings</Tab>
        <Tab $w={68}>Ami Script</Tab>
        <Tab $w={69}>Field Style</Tab>
        <Tab $w={36}>Help</Tab>
      </TabStrip>
      <FormBody>
        <FormRow>
          <FormLabel>Label:</FormLabel>
          <Controls><TextInput $w={180}>Duplicate Panel</TextInput></Controls>
          <FormLabel>Variable Name:</FormLabel>
          <Controls><TextInput $w={180}>duplicatepanel</TextInput></Controls>
        </FormRow>
        <FormRow>
          <FormLabel>Default Value:</FormLabel>
          <Controls $span>
            <TextInput $w={946}>
              <PlusSlot><Plus size={17} strokeWidth={3.5} /></PlusSlot>
            </TextInput>
          </Controls>
        </FormRow>
        <FormRow>
          <FormLabel>Style:</FormLabel>
          <Controls $span>
            <TextInput $w={946}>
              <PlusSlot><Plus size={17} strokeWidth={3.5} /></PlusSlot>
            </TextInput>
          </Controls>
        </FormRow>
        <FormRow>
          <FormLabel>Field Status:</FormLabel>
          <ButtonSet items={[["Enabled", 58, true], ["Disabled", 57]]} />
        </FormRow>
        <FormRow>
          <FormLabel>Display Mode:</FormLabel>
          <ButtonSet items={[["Absolute Position", 103, true], ["Embed in HTML", 97]]} />
        </FormRow>
        <FormRow>
          <span />
          <SectionTitle>HORIZONTAL SETTINGS</SectionTitle>
          <span />
          <SectionTitle>VERTICAL SETTINGS</SectionTitle>
        </FormRow>
        <FormRow $h={23}>
          <FormLabel>Alignment:</FormLabel>
          <ButtonSet items={[["Left", 58], ["Center", 57, true], ["Right", 57], ["Justify", 58], ["Advanced", 64]]} />
          <FormLabel>Alignment:</FormLabel>
          <ButtonSet items={[["Top", 58], ["Center", 58, true], ["Bottom", 58], ["Justify", 57], ["Advanced", 64]]} />
        </FormRow>
        <FormRow $h={22}>
          <FormLabel $top>Stretch:</FormLabel>
          <Controls><CheckBox /></Controls>
          <FormLabel $top>Stretch:</FormLabel>
          <Controls><CheckBox /></Controls>
        </FormRow>
        <FormRow>
          <FormLabel>Width (px):</FormLabel>
          <Slider track={145} value={82} box={25} num="200" />
          <FormLabel>Height (px):</FormLabel>
          <Slider track={146} value={18} box={22} num="20" />
        </FormRow>
        <FormRow>
          <FormLabel>Offset From Center (%):</FormLabel>
          <Slider track={150} value={76} box={20} num="0" />
          <FormLabel>Offset From Center (%):</FormLabel>
          <Slider track={149} value={75} box={19} num="0" />
        </FormRow>
        <FormRow>
          <span />
          <SectionTitle>BUTTON FIELD OPTIONS</SectionTitle>
        </FormRow>
        <FormRow>
          <span />
          <Controls $gap={1}>
            <CheckBox />
            <CheckText>Disable After First Click</CheckText>
          </Controls>
        </FormRow>
      </FormBody>
      <Footer>
        <FooterButton>Submit</FooterButton>
        <FooterButton>Cancel</FooterButton>
      </Footer>
    </Dialog>
  </Desktop>
);

export default App;
